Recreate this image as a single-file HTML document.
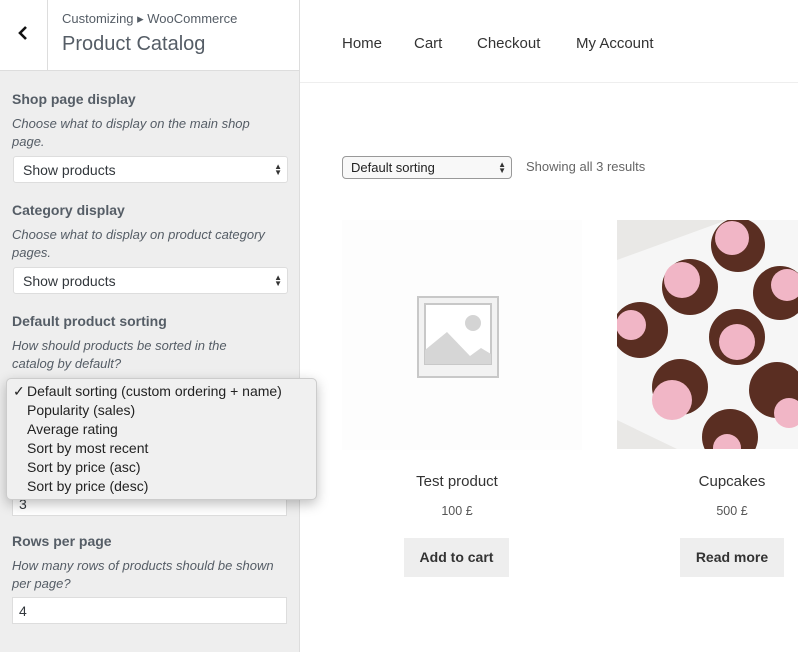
<!DOCTYPE html>
<html><head><meta charset="utf-8"><style>
*{margin:0;padding:0;box-sizing:border-box}
body{width:798px;height:652px;overflow:hidden;background:#fff;font-family:"Liberation Sans",sans-serif;position:relative}
.a{position:absolute;white-space:nowrap}
#side{position:absolute;left:0;top:0;width:300px;height:652px;background:#eee;border-right:1px solid #ddd}
#hdr{position:absolute;left:0;top:0;width:300px;height:71px;background:#fff;border-bottom:1px solid #ddd;border-right:1px solid #ddd}
.lbl{font-size:14px;font-weight:bold;color:#555d66}
.desc{font-size:13px;font-style:italic;color:#555d66;line-height:18px}
.sel{position:absolute;left:13px;width:275px;height:27px;background:#fff;border:1px solid #ddd;border-radius:3px;font-size:14px;color:#32373c;padding:5px 9px}
.arr{position:absolute;right:5px;top:7px;font-size:8px;line-height:6px;color:#333}
.inp{position:absolute;left:12px;width:275px;height:27px;background:#fff;border:1px solid #ddd;font-size:14px;color:#32373c;padding:5px 6px}
.nav{font-size:15px;color:#333;top:35px}
.btn{position:absolute;top:538px;height:39px;background:#eee;font-size:14px;font-weight:bold;color:#333;text-align:center;line-height:39px}
.dd div{position:absolute;left:20px}
</style></head><body>
<div id="side"></div>
<div id="hdr"></div>
<div class="a" style="left:47px;top:0;width:1px;height:70px;background:#ddd"></div>
<svg class="a" style="left:17px;top:25px" width="12" height="16"><path d="M9 2 L3 8 L9 14" stroke="#111" stroke-width="2.6" fill="none"/></svg>
<div class="a" style="left:62px;top:11px;font-size:13px;color:#555d66">Customizing ▸ WooCommerce</div>
<div class="a" style="left:62px;top:33px;font-size:20px;color:#555d66;font-weight:300">Product Catalog</div>

<div class="a lbl" style="left:12px;top:91px">Shop page display</div>
<div class="a desc" style="left:12px;top:115px">Choose what to display on the main shop<br>page.</div>
<div class="sel" style="top:156px">Show products<span class="arr">▲<br>▼</span></div>
<div class="a lbl" style="left:12px;top:202px">Category display</div>
<div class="a desc" style="left:12px;top:226px">Choose what to display on product category<br>pages.</div>
<div class="sel" style="top:267px">Show products<span class="arr">▲<br>▼</span></div>
<div class="a lbl" style="left:12px;top:313px">Default product sorting</div>
<div class="a desc" style="left:12px;top:337px">How should products be sorted in the<br>catalog by default?</div>
<div class="inp" style="top:490px;height:26px">3</div>
<div class="a dd" style="left:6px;top:378px;width:311px;height:122px;background:#f0f0f0;border:1px solid #ccc;border-radius:5px;box-shadow:0 4px 12px rgba(0,0,0,.25);font-size:14px;color:#222;line-height:19px">
<div style="left:6px;top:3px">✓</div>
<div style="top:3px">Default sorting (custom ordering + name)</div>
<div style="top:22px">Popularity (sales)</div>
<div style="top:41px">Average rating</div>
<div style="top:60px">Sort by most recent</div>
<div style="top:79px">Sort by price (asc)</div>
<div style="top:98px">Sort by price (desc)</div>
</div>
<div class="a lbl" style="left:12px;top:533px">Rows per page</div>
<div class="a desc" style="left:12px;top:557px">How many rows of products should be shown<br>per page?</div>
<div class="inp" style="top:597px">4</div>

<div class="a nav" style="left:342px">Home</div>
<div class="a nav" style="left:414px">Cart</div>
<div class="a nav" style="left:477px">Checkout</div>
<div class="a nav" style="left:576px">My Account</div>
<div class="a" style="left:300px;top:82px;width:498px;height:1px;background:#eee"></div>

<div class="a" style="left:342px;top:156px;width:170px;height:23px;border:1px solid #999;border-radius:4px;background:#f8f8f8;font-size:13px;color:#222;padding:3px 8px">Default sorting<span class="arr" style="top:5px">▲<br>▼</span></div>
<div class="a" style="left:526px;top:159px;font-size:13px;color:#666">Showing all 3 results</div>

<div class="a" style="left:342px;top:220px;width:240px;height:230px;background:#fdfdfd"></div>
<svg class="a" style="left:415px;top:294px" width="86" height="86"><rect x="3" y="3" width="80" height="80" fill="#f2f2f2" stroke="#c8c8c8" stroke-width="2"/><rect x="10" y="10" width="66" height="60" fill="#fff" stroke="#c8c8c8" stroke-width="2"/><circle cx="58" cy="29" r="8" fill="#d4d4d4"/><path d="M10 56 L32 38 L55 62 L66 54 L76 60 L76 70 L10 70Z" fill="#d6d6d6"/></svg>

<svg class="a" style="left:617px;top:220px" width="181" height="229">
<rect width="181" height="229" fill="#e9e8e6"/>
<path d="M0 40 L110 0 L181 0 L181 229 L60 229 L0 200Z" fill="#f6f6f6"/>
<g fill="#5a2e22"><circle cx="121" cy="25" r="27"/><circle cx="73" cy="67" r="28"/><circle cx="163" cy="73" r="27"/><circle cx="23" cy="110" r="28"/><circle cx="120" cy="117" r="28"/><circle cx="63" cy="167" r="28"/><circle cx="160" cy="170" r="28"/><circle cx="113" cy="217" r="28"/></g>
<g fill="#f1b6c6"><circle cx="115" cy="18" r="17"/><circle cx="65" cy="60" r="18"/><circle cx="170" cy="65" r="16"/><circle cx="14" cy="105" r="15"/><circle cx="120" cy="122" r="18"/><circle cx="55" cy="180" r="20"/><circle cx="172" cy="193" r="15"/><circle cx="110" cy="228" r="14"/></g>
</svg>

<div class="a" style="left:342px;top:473px;width:230px;text-align:center;font-size:15px;color:#333">Test product</div>
<div class="a" style="left:342px;top:504px;width:230px;text-align:center;font-size:12.5px;color:#555">100 £</div>
<div class="btn" style="left:404px;width:105px">Add to cart</div>
<div class="a" style="left:667px;top:473px;width:130px;text-align:center;font-size:15px;color:#333">Cupcakes</div>
<div class="a" style="left:667px;top:504px;width:130px;text-align:center;font-size:12.5px;color:#555">500 £</div>
<div class="btn" style="left:680px;width:104px">Read more</div>
</body></html>
